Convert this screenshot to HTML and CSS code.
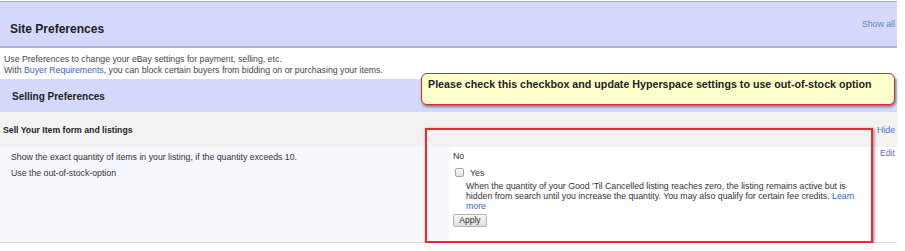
FILE: index.html
```html
<!DOCTYPE html>
<html lang="en">
<head>
  <meta charset="UTF-8" />
  <title>Site Preferences</title>
  <link rel="stylesheet" href="styles.css">
</head>
<body>

  <div class="page">

    <div class="site-head">
      <h1>Site Preferences</h1>
      <a href="#" class="show-all">Show all</a>
    </div>

    <div class="intro">
      <p>Use Preferences to change your eBay settings for payment, selling, etc.</p>
      <p>With <a href="#">Buyer Requirements</a>, you can block certain buyers from bidding on or purchasing your items.</p>
    </div>

    <div class="section-head">
      <h2>Selling Preferences</h2>
    </div>

    <div class="group-head">
      <h3>Sell Your Item form and listings</h3>
      <a href="#" class="hide">Hide</a>
    </div>

    <div class="group-body">
      <div class="labels">
        <div class="row">Show the exact quantity of items in your listing, if the quantity exceeds 10.</div>
        <div class="row">Use the out-of-stock-option</div>
      </div>
      <div class="values">
        <div class="row">No</div>
        <label class="opt"><input type="checkbox"> Yes</label>
        <p class="note">When the quantity of your Good 'Til Cancelled listing reaches zero, the listing remains active but is<br>hidden from search until you increase the quantity. You may also qualify for certain fee credits. <a href="#">Learn<br>more</a></p>
        <button>Apply</button>
      </div>
      <div class="actions">
        <a href="#" class="edit">Edit</a>
      </div>
    </div>

    <!-- annotation overlays -->
    <div class="callout">Please check this checkbox and update Hyperspace settings to use out-of-stock option</div>
    <div class="highlight"></div>

  </div>

</body>
</html>
```

FILE: styles.css
```css
body {
  margin: 0;
  padding: 0;
  background: #fff;
  font-family: 'Liberation Sans', Arial, sans-serif;
  font-size: 8.75px;
  color: #333;
}

a {
  color: #3d62bf;
  text-decoration: none;
}

p {
  margin: 0;
}

.page {
  position: relative;
  width: 897px;
  padding-top: 1px;
}

.site-head {
  display: flex;
  justify-content: space-between;
  height: 44px;
  padding: 0 2px 0 10px;
  background: #d4d9fc;
  border-top: 1px solid #a9acd6;
  border-bottom: 2px solid #aeb1da;
}

.site-head h1 {
  margin: 0;
  padding-top: 20px;
  font-size: 12px;
  line-height: 14px;
  color: #222;
}

.show-all {
  padding-top: 17px;
  line-height: 11px;
  color: #6283cf;
}

.intro {
  height: 31px;
  padding: 6px 4px 0;
  box-sizing: border-box;
  line-height: 10.5px;
  color: #444;
}

.section-head {
  display: flex;
  align-items: center;
  height: 32px;
  padding-left: 12px;
  background: #d4d9fc;
  border-top: 1px solid #dcdcdc;
}

.section-head h2 {
  margin: 0;
  font-size: 10px;
  color: #222;
}

.group-head {
  display: flex;
  justify-content: space-between;
  align-items: center;
  height: 35px;
  padding: 0 2px 0 3px;
  background: #f2f2f2;
}

.group-head h3 {
  margin: 0;
  font-size: 8.7px;
  color: #222;
}

.hide {
  color: #4d70c6;
}

.group-body {
  display: grid;
  grid-template-columns: 449px 1fr 30px;
  height: 95px;
  border-bottom: 1px solid #dedede;
}

.labels {
  background: #f7f7fe;
  padding: 2px 0 0 11px;
}

.row {
  height: 16px;
  line-height: 16px;
}

.values {
  padding: 1px 0 0 4px;
}

.opt {
  display: flex;
  align-items: center;
  gap: 6px;
  height: 17px;
  padding-left: 2px;
}

.opt input {
  appearance: none;
  margin: 0;
  width: 9px;
  height: 9px;
  border: 1px solid #a5a5a5;
  border-radius: 2px;
  background: linear-gradient(#fdfdfd, #dcdcdc);
}

.note {
  padding-left: 13px;
  line-height: 10.2px;
  white-space: nowrap;
}

button {
  margin-top: 2px;
  width: 34px;
  height: 13px;
  padding: 0;
  font-family: inherit;
  font-size: 8.5px;
  color: #333;
  border: 1px solid #b5b5b5;
  border-radius: 2px;
  background: linear-gradient(#f6f6f6, #dedede);
}

.actions {
  text-align: right;
  padding: 1px 2px 0 0;
  line-height: 11px;
}

.edit {
  color: #7a5fca;
}

.callout {
  position: absolute;
  left: 421px;
  top: 73px;
  width: 474px;
  height: 32px;
  box-sizing: border-box;
  padding: 4px 0 0 6px;
  background: #ffffcc;
  border: 1.5px solid #d8262c;
  border-radius: 6px;
  box-shadow: 1px 2px 3px rgba(0, 0, 0, 0.45);
  font-size: 10.7px;
  font-weight: bold;
  line-height: 13px;
  color: #222;
}

.highlight {
  position: absolute;
  left: 425px;
  top: 128px;
  width: 448px;
  height: 115px;
  box-sizing: border-box;
  border: 2px solid #ea2a2e;
  box-shadow: 1px 1px 3px rgba(0, 0, 0, 0.5);
}
```
